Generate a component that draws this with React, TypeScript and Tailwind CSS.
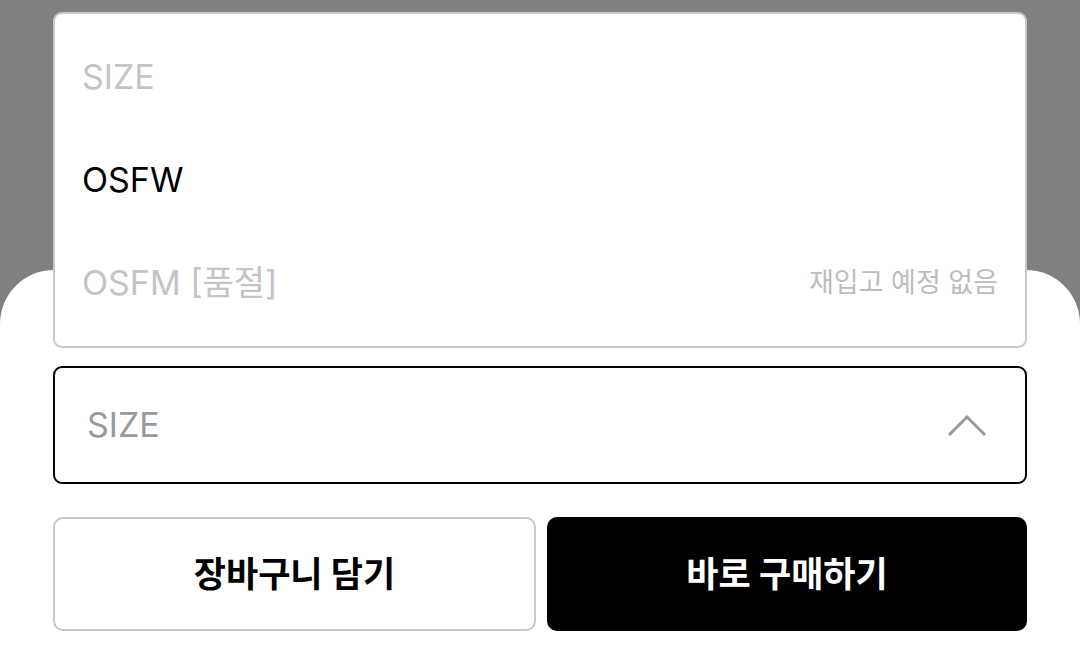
import { useState } from 'react'

const FONT = "font-['Inter','Noto_Sans_CJK_KR',sans-serif]"

interface Option { label: string; soldOut?: boolean; note?: string; placeholder?: boolean }

const options: Option[] = [
  { label: 'SIZE', placeholder: true },
  { label: 'OSFW' },
  { label: 'OSFM [품절]', soldOut: true, note: '재입고 예정 없음' },
]

export default function App() {
  const [open, setOpen] = useState(true)

  return (
    <div className={`w-[1080px] h-[662px] bg-[#808080] flex flex-col overflow-hidden ${FONT}`}>
      <div className="h-[270px] shrink-0" />

      {/* Bottom sheet */}
      <div className="flex-1 bg-white rounded-t-[54px] px-[53px] pt-[96px]">
        <div className="relative">
          {/* Option list */}
          {open && (
            <div className="absolute left-0 right-0 bottom-full mb-[18px] h-[336px] bg-white border-2 border-[#c8c8c8] rounded-[9px] py-[12px] flex flex-col">
              {options.map(o => (
                <div key={o.label} className="h-[104px] flex items-center justify-between pl-[27px] pr-[27px]">
                  <span className={`text-[34px] leading-none ${o.placeholder || o.soldOut ? 'text-[#c4c4c4]' : 'text-black'}`}>{o.label}</span>
                  {o.note && <span className="text-[27px] leading-none text-[#bdbdbd]">{o.note}</span>}
                </div>
              ))}
            </div>
          )}

          {/* Select box */}
          <button onClick={() => setOpen(p => !p)}
            className="w-full h-[118px] border-2 border-black rounded-[9px] flex items-center justify-between pl-[32px] pr-[38px]">
            <span className="text-[34px] leading-none text-[#999999]">SIZE</span>
            <svg width="40" height="24" viewBox="0 0 40 24" fill="none">
              <path d="M2 22 L20 4 L38 22" stroke="#999999" strokeWidth="3" />
            </svg>
          </button>
        </div>

        {/* Actions */}
        <div className="mt-[33px] flex gap-[11px]">
          <button className="w-[483px] h-[114px] border-2 border-[#c8c8c8] rounded-[10px] text-[35px] font-bold text-black">
            장바구니 담기
          </button>
          <button className="flex-1 h-[114px] bg-black rounded-[10px] text-[35px] font-bold text-white">
            바로 구매하기
          </button>
        </div>
      </div>
    </div>
  )
}
